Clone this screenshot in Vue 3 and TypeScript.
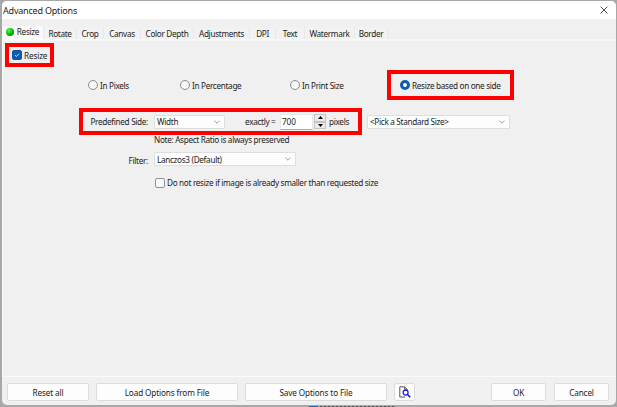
<template>
  <div class="desktop">
    <div class="peek">
      <i class="peek-mark"></i>
      <i class="peek-line"></i>
    </div>
    <div class="dialog">
      <header class="title-bar">
        <span class="title">Advanced Options</span>
        <svg class="close" viewBox="0 0 9 9"><path d="M0.7 0.7L8.3 8.3M8.3 0.7L0.7 8.3" /></svg>
      </header>

      <nav class="tabs">
        <div
          v-for="tab in tabs"
          :key="tab.name"
          class="tab"
          :class="{ active: tab.name === activeTab }"
          :style="{ width: tab.width + 'px' }"
          @click="activeTab = tab.name"
        >
          <i v-if="tab.name === 'Resize'" class="led"></i>
          <span>{{ tab.name }}</span>
        </div>
      </nav>

      <main class="panel">
        <div class="highlight enable" @click="enabled = !enabled">
          <span class="check" :class="{ checked: enabled }">
            <svg v-if="enabled" viewBox="0 0 10 10"><path d="M2.5 5.1L4.3 6.8L7.6 3.4" /></svg>
          </span>
          <span>Resize</span>
        </div>

        <div class="modes">
          <div
            v-for="m in modes"
            :key="m"
            class="mode"
            :class="{ highlight: m === 'Resize based on one side' }"
            @click="mode = m"
          >
            <span class="radio" :class="{ on: m === mode }"></span>
            <span>{{ m }}</span>
          </div>
        </div>

        <div class="size-row">
          <div class="highlight side">
            <span class="label predefined">Predefined Side:</span>
            <div class="select side-select">
              <span>Width</span>
              <svg class="chevron" viewBox="0 0 6 4"><path d="M0.4 0.6L3 3.2L5.6 0.6" /></svg>
            </div>
            <span class="exactly">exactly =</span>
            <div class="number">{{ size }}</div>
            <div class="spinner">
              <button @click="size++"><svg viewBox="0 0 5 3"><path d="M0 3L2.5 0L5 3Z" /></svg></button>
              <button @click="size--"><svg viewBox="0 0 5 3"><path d="M0 0L2.5 3L5 0Z" /></svg></button>
            </div>
            <span class="pixels">pixels</span>
          </div>
          <div class="select standard">
            <span>&lt;Pick a Standard Size&gt;</span>
            <svg class="chevron" viewBox="0 0 6 4"><path d="M0.4 0.6L3 3.2L5.6 0.6" /></svg>
          </div>
        </div>

        <p class="note">Note: Aspect Ratio is always preserved</p>

        <div class="filter-row">
          <span class="label">Filter:</span>
          <div class="select filter">
            <span>Lanczos3 (Default)</span>
            <svg class="chevron" viewBox="0 0 6 4"><path d="M0.4 0.6L3 3.2L5.6 0.6" /></svg>
          </div>
        </div>

        <div class="skip" @click="skipSmaller = !skipSmaller">
          <span class="check" :class="{ checked: skipSmaller }"></span>
          <span>Do not resize if image is already smaller than requested size</span>
        </div>
      </main>

      <footer class="actions">
        <button class="btn reset"><span>Reset all</span></button>
        <button class="btn load"><span>Load Options from File</span></button>
        <button class="btn save"><span>Save Options to File</span></button>
        <button class="btn preview">
          <svg viewBox="0 0 12 12">
            <path class="page" d="M6 11H0.8V0.8H5.6L8.2 3.4V4" />
            <path class="page" d="M5.6 0.8V3.4H8.2" />
            <circle cx="6.6" cy="6.6" r="2.5" />
            <path class="handle" d="M8.5 8.5L11.2 11.2" />
          </svg>
        </button>
        <button class="btn ok"><span>OK</span></button>
        <button class="btn cancel"><span>Cancel</span></button>
      </footer>
    </div>
  </div>
</template>

<script setup lang="ts">
import { ref } from 'vue';

interface Tab {
  name: string;
  width: number;
}

const tabs: Tab[] = [
  { name: 'Resize', width: 42 },
  { name: 'Rotate', width: 33 },
  { name: 'Crop', width: 27 },
  { name: 'Canvas', width: 37 },
  { name: 'Color Depth', width: 53 },
  { name: 'Adjustments', width: 56 },
  { name: 'DPI', width: 26 },
  { name: 'Text', width: 29 },
  { name: 'Watermark', width: 50 },
  { name: 'Border', width: 33 },
];
const modes = ['In Pixels', 'In Percentage', 'In Print Size', 'Resize based on one side'];

const activeTab = ref('Resize');
const mode = ref('Resize based on one side');
const enabled = ref(true);
const skipSmaller = ref(false);
const size = ref(700);
</script>

<style>
body {
  margin: 0;
  overflow: hidden;
}
</style>

<style scoped>
* {
  box-sizing: border-box;
}

.desktop {
  position: relative;
  width: 617px;
  height: 407px;
  padding: 1px 1px 2px 2px;
  background: #a9a8a8;
  font-family: "Noto Sans", "Open Sans", sans-serif;
  font-size: 8.2px;
  letter-spacing: -0.32px;
  line-height: 11px;
  color: #222;
  white-space: nowrap;
}

/* Window behind the dialog, only its top edge shows */
.peek {
  position: absolute;
  left: 309px;
  top: 406px;
  height: 1px;
  display: flex;
  gap: 2px;
}

.peek-mark {
  width: 9px;
  background: #2565ae;
}

.peek-line {
  width: 76px;
  background: repeating-linear-gradient(90deg, #555 0 2px, #999 2px 4px);
}

.dialog {
  display: flex;
  flex-direction: column;
  height: 404px;
  background: #f0f0f0;
  border-radius: 5px;
  overflow: hidden;
}

.title-bar {
  display: flex;
  align-items: center;
  justify-content: space-between;
  height: 18px;
  padding: 0 8px 0 1px;
  background: #fff;
}

.title {
  font-size: 9px;
  letter-spacing: -0.2px;
}

.close {
  width: 8px;
  height: 8px;
  stroke: #333;
  fill: none;
}

.tabs {
  display: flex;
  align-items: flex-end;
  height: 20px;
}

.tab {
  display: flex;
  align-items: center;
  justify-content: center;
  height: 12px;
  background: #f2f2f2;
  border-right: 1px solid #e8e8e8;
}

.tab.active {
  height: 13px;
  padding-bottom: 2px;
  gap: 3px;
  background: #f9f9f9;
}

.led {
  width: 8px;
  height: 8px;
  border-radius: 50%;
  background: radial-gradient(circle at 35% 30%, #58f558, #06c806 45%, #025b02);
}

.panel {
  height: 338px;
  padding-top: 2px;
  border-top: 2px solid #f8f8f8;
  border-bottom: 1px solid #fafafa;
  border-left: 1px solid #f8f8f8;
}

.highlight {
  border: 4px solid #f00;
}

.enable {
  display: flex;
  align-items: center;
  gap: 2px;
  width: 49px;
  height: 24px;
  margin-left: 2px;
  padding-left: 3px;
  letter-spacing: -0.15px;
}

.check {
  display: block;
  flex: none;
  width: 10px;
  height: 10px;
  border: 1px solid #919191;
  border-radius: 2px;
  background: #f7f7f7;
}

.check.checked {
  border-color: #0a58a8;
  background: #0a5db5;
}

.check svg {
  display: block;
  width: 8px;
  height: 8px;
  fill: none;
  stroke: #fff;
}

.modes {
  display: grid;
  grid-template-columns: 92px 110px 97px 127px;
  height: 30px;
  margin: 3px 0 0 85px;
}

.mode {
  display: flex;
  align-items: center;
  gap: 2px;
}

.mode.highlight {
  padding-left: 9px;
}

.radio {
  width: 10px;
  height: 10px;
  border: 1px solid #8b8b8b;
  border-radius: 50%;
  background: #f7f7f7;
}

.radio.on {
  border: 3px solid #0a5db5;
  background: #fff;
}

.size-row {
  display: flex;
  align-items: center;
  height: 27px;
  margin: 8px 0 0 76px;
}

.side {
  display: flex;
  align-items: center;
  width: 283px;
  height: 27px;
}

.label {
  text-align: right;
}

.predefined {
  width: 65px;
  margin-right: 6px;
}

.select {
  display: flex;
  align-items: center;
  justify-content: space-between;
  height: 14px;
  padding: 0 4px 0 2px;
  background: #fdfdfd;
  border: 1px solid #dedede;
  border-radius: 1px;
}

.side-select {
  width: 71px;
}

.chevron {
  width: 6px;
  height: 4px;
  fill: none;
  stroke: #777;
  stroke-width: 0.7;
}

.exactly {
  width: 30px;
  margin: 0 5px 0 20px;
}

.number {
  width: 33px;
  height: 16px;
  padding: 1px 0 0 1px;
  background: #fff;
  border: 1px solid #e8e8e8;
  border-bottom-color: #aaa;
  letter-spacing: -0.1px;
}

.spinner {
  width: 12px;
  height: 15px;
  margin: 0 3px 0 1px;
  display: flex;
  flex-direction: column;
}

.spinner button {
  display: flex;
  align-items: center;
  justify-content: center;
  flex: 1;
  min-height: 0;
  padding: 0;
  border: 1px solid #c4c4c4;
  background: #ececec;
}

.spinner svg {
  width: 5px;
  height: 3px;
}

.standard {
  width: 143px;
  margin-left: 5px;
}

.note {
  margin: -1px 0 0 151px;
}

.filter-row {
  display: flex;
  align-items: center;
  height: 14px;
  margin-top: 7px;
}

.filter-row .label {
  width: 145px;
  margin-right: 6px;
  padding-top: 2px;
}

.filter {
  width: 142px;
}

.skip {
  display: flex;
  align-items: center;
  gap: 2px;
  margin: 11px 0 0 152px;
}

.actions {
  display: flex;
  flex: 1;
  padding: 6px 0 0 5px;
}

.btn {
  display: flex;
  align-items: center;
  justify-content: center;
  height: 18px;
  padding: 0;
  background: #fdfdfd;
  border: 1px solid #dcdcdc;
  border-radius: 2px;
  font: inherit;
  letter-spacing: -0.13px;
  color: inherit;
}

.reset {
  width: 82px;
}

.load {
  width: 142px;
  margin-left: 7px;
}

.save {
  width: 142px;
  margin-left: 7px;
}

.preview {
  width: 21px;
  margin-left: 7px;
}

.preview svg {
  width: 12px;
  height: 12px;
  fill: none;
}

.page {
  stroke: #555;
}

.preview circle {
  stroke: #1212ee;
  stroke-width: 1.2;
}

.handle {
  stroke: #1212ee;
  stroke-width: 1.6;
}

.ok {
  width: 55px;
  margin-left: 76px;
}

.cancel {
  width: 55px;
  margin-left: 8px;
}
</style>
